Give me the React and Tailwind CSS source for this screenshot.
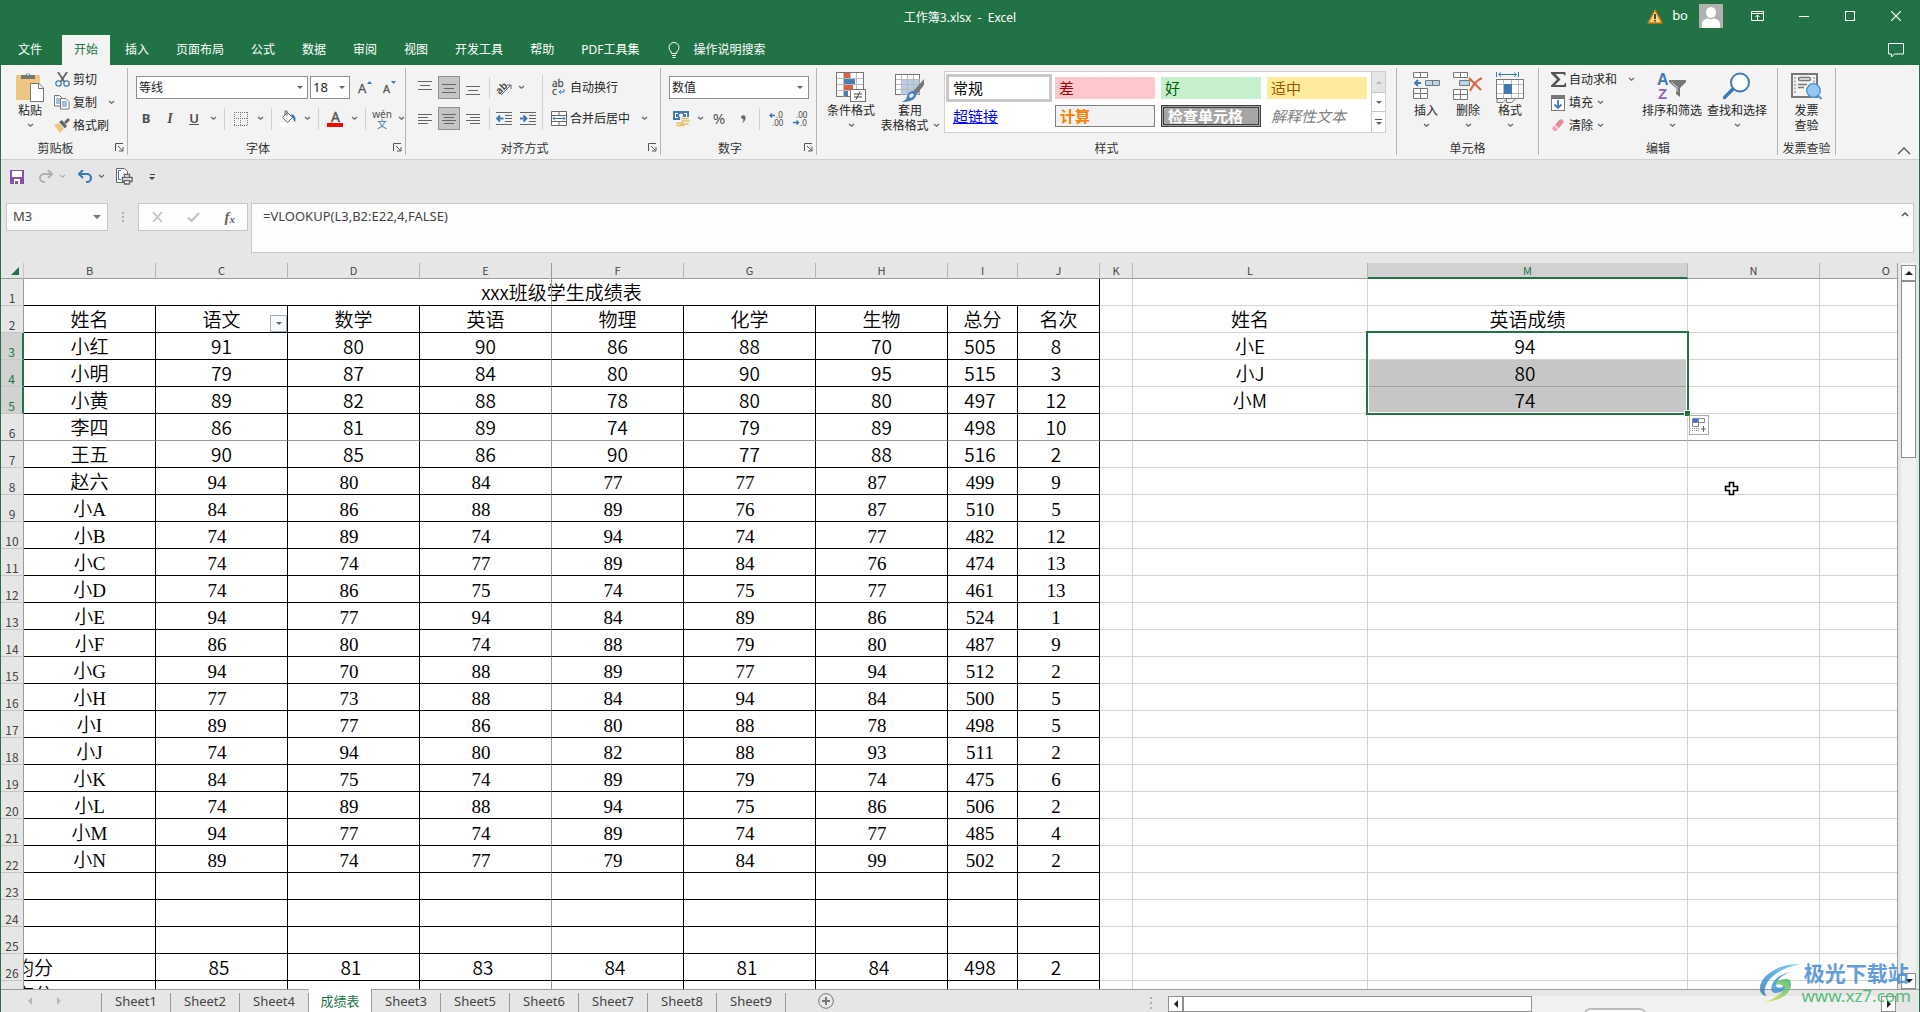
import React from "react";

/* ---------- small drawing helpers ---------- */
const Chev = ({ c = "#666" }) => (
  <svg width="7" height="5" viewBox="0 0 7 5" className="shrink-0">
    <path d="M1 1l2.500 2.300L6 1" fill="none" stroke={c} strokeWidth="1.200" />
  </svg>
);
const Tri = ({ c = "#666", w = 8 }) => (
  <svg width={w} height={w / 2} viewBox="0 0 8 4" className="shrink-0">
    <path d="M0 0h8L4 4z" fill={c} />
  </svg>
);
const Launcher = () => (
  <button aria-label="更多设置" className="absolute right-[3px] bottom-[3px]">
    <svg width="9" height="9" viewBox="0 0 9 9" fill="none" stroke="#555">
      <path d="M.5 8V.5H8M3 3l4.500 4.500M8 4v4H4" />
    </svg>
  </button>
);
const Sep = () => <span className="mx-1 h-[22px] w-px shrink-0 bg-[#d0d0d0]" />;
const Ib = ({ label, children }) => (
  <button aria-label={label} className="flex h-[23px] w-6 shrink-0 items-center justify-center">
    {children}
  </button>
);
const Cb = ({ label = "展开" }) => (
  <button aria-label={label} className="flex h-[23px] w-[14px] shrink-0 items-center justify-center">
    <Chev />
  </button>
);

const PasteIcon = () => (
  <svg width="28" height="30" viewBox="0 0 28 30">
    <rect x="0" y="3" width="24" height="25" rx="1" fill="#edc77f" />
    <path d="M5 7V3h4.500a2.700 2.700 0 0 1 5 0H19v4z" fill="#777" />
    <circle cx="12" cy="2.500" r="1" fill="#f3f3f3" />
    <path d="M14.500 11.500h8.500l4.500 4.500v13.500h-13z" fill="#fff" stroke="#777" />
    <path d="M22.500 11.500v5h5" fill="none" stroke="#777" />
  </svg>
);
const CutIcon = () => (
  <svg width="15" height="15" viewBox="0 0 15 15" fill="none">
    <path d="M3 0l6.500 10M12 0L5.500 10" stroke="#666" strokeWidth="1.800" />
    <circle cx="3.500" cy="11.500" r="2.700" stroke="#4a7fb5" strokeWidth="1.300" />
    <circle cx="11.500" cy="11.500" r="2.700" stroke="#4a7fb5" strokeWidth="1.300" />
  </svg>
);
const CopyIcon = () => (
  <svg width="16" height="15" viewBox="0 0 16 15" fill="#fff">
    <path d="M.5.500h5l2.500 2.500v8H.5z" stroke="#777" />
    <path d="M2 4h4M2 6h4M2 8h4" stroke="#4a7fb5" />
    <path d="M6.500 3.500h5.500l3 3v7.500H6.500z" stroke="#777" />
    <path d="M8 7h5M8 9h5M8 11h5" stroke="#4a7fb5" />
  </svg>
);
const BrushIcon = () => (
  <svg width="16" height="15" viewBox="0 0 16 15">
    <path d="M0 7l5-2 5 6-4 4z" fill="#edc77f" />
    <path d="M5 4l3-2 5 6-2 2.500z" fill="#666" />
    <path d="M10 4l4-4 2 2-4 4z" fill="#666" />
  </svg>
);
const Lines = ({ rows }) => (
  <svg width="14" height="14" viewBox="0 0 14 14" stroke="#666">
    {rows.map(([y, a, b]) => (
      <path key={y} d={`M${a} ${y}.5H${b}`} />
    ))}
  </svg>
);
const Indent = ({ out }) => (
  <svg width="16" height="13" viewBox="0 0 16 13" fill="none">
    <path d="M0 .5h16M9 3.500h7M9 6.500h7M9 9.500h7M0 12.500h16" stroke="#666" />
    <path d={out ? "M7.500 6.500h-6M4 3.500l-3 3 3 3" : "M0 6.500h6M3.500 3.500l3 3-3 3"} stroke="#3f78b5" strokeWidth="1.800" />
  </svg>
);
const Decimal = ({ more }) => (
  <svg width="15" height="14" viewBox="0 0 15 14" className="overflow-visible">
    <text x={more ? 7 : 3} y="6" fontSize="8" fontFamily="Noto Sans, sans-serif" fill="#444">{more ? ".0" : ".00"}</text>
    <text x={more ? 3 : 7} y="14" fontSize="8" fontFamily="Noto Sans, sans-serif" fill="#444">{more ? ".00" : ".0"}</text>
    <path d={more ? "M6 3.500H1M3 1.500l-2 2 2 2" : "M0 10.500h5M3.500 8.500l2 2-2 2"} fill="none" stroke="#3f78b5" strokeWidth="1.300" />
  </svg>
);
const CondIcon = () => (
  <svg width="31" height="30" viewBox="0 0 31 30">
    <rect x=".5" y=".5" width="27" height="24" fill="#fff" stroke="#777" />
    <path d="M7.500 1v24M14.500 1v24M20.500 1v24M1 6.500h26M1 12.500h26M1 18.500h26" stroke="#bbb" />
    <rect x="8" y="1" width="6" height="5" fill="#dc6141" />
    <rect x="8" y="7" width="11" height="5" fill="#4a7fb5" />
    <rect x="8" y="13" width="9" height="5" fill="#dc6141" />
    <rect x="8" y="19" width="4" height="5" fill="#4a7fb5" />
    <rect x="14.500" y="17.500" width="15" height="12" fill="#fff" stroke="#777" />
    <path d="M18 22h8M18 25h8M24 19.500l-4 8" stroke="#444" fill="none" />
  </svg>
);
const TableIcon = () => (
  <svg width="30" height="30" viewBox="0 0 30 30">
    <rect x=".5" y="2.500" width="24" height="20" fill="#fff" stroke="#777" />
    <rect x="6.500" y="7.500" width="18" height="15" fill="#b9cde5" />
    <path d="M6.500 3v20M12.500 3v20M18.500 3v20M1 7.500h24M1 12.500h24M1 17.500h24" stroke="#bbb" />
    <path d="M29 7v6l-7 9-3.500-3z" fill="#777" />
    <path d="M18 19c3 0 4.500 3 2.500 6-2 4-8 5-14 5 5-2 5-4 6-7 1-2.500 3-4 5.500-4z" fill="#4a7fb5" />
    <path d="M14 24c1-3 4-3 5-1-1 2-2 3-4 3z" fill="#dbe8f5" />
  </svg>
);
const InsertIcon = () => (
  <svg width="27" height="28" viewBox="0 0 27 28" fill="#fff" stroke="#777">
    <path d="M.5.500h14v5H.5zM7.500.500v5M.5 16.500h14v10H.5zM7.500 16.500v10M.5 21.500h14" />
    <path d="M12.500 8.500h14v5h-14zM19.500 8.500v5" fill="#b9d3ea" />
    <path d="M8 11H2M5 8l-3 3 3 3" fill="none" stroke="#3f78b5" strokeWidth="1.800" />
  </svg>
);
const DeleteIcon = () => (
  <svg width="30" height="28" viewBox="0 0 30 28" fill="#fff" stroke="#777">
    <path d="M.5.500h14v5H.5zM7.500.500v5M.5 17.500h14v10H.5zM7.500 17.500v10M.5 22.500h14" />
    <path d="M6.500 8.500h10v5h-10z" fill="#b9d3ea" />
    <path d="M16 6l12 12M29 6c-5 2-9 7-12 13" fill="none" stroke="#dc6141" strokeWidth="2" />
  </svg>
);
const FormatIcon = () => (
  <svg width="29" height="31" viewBox="0 0 29 31" fill="#fff">
    <path d="M.5 0v5M22.500 0v5M3 2.500h17M5 .5l-2.500 2L5 4.500M18 .5l2.500 2-2.500 2" fill="none" stroke="#3f78b5" />
    <rect x=".5" y="7.500" width="27" height="19" stroke="#777" />
    <path d="M7.500 8v18M15.500 8v18M22.500 8v18M1 12.500h26M1 21.500h26" stroke="#bbb" />
    <rect x="8" y="12" width="8" height="10" fill="#3f78b5" />
    <path d="M1 27v3.500h6l3-3M10.500 27v3.500h5l4-3.500" stroke="#777" fill="none" />
  </svg>
);
const SortIcon = () => (
  <svg width="30" height="29" viewBox="0 0 30 29" className="overflow-visible">
    <text x="0" y="13" fontSize="16" fontWeight="bold" fontFamily="Liberation Sans, sans-serif" fill="#4179b5">A</text>
    <text x="1" y="27" fontSize="15" fontWeight="bold" fontFamily="Liberation Sans, sans-serif" fill="#9a5fb8">Z</text>
    <path d="M12 8h17v2l-6 6v9l-4-3v-6l-7-6z" fill="#777" />
    <path d="M14.500 10l5.500 5v5" stroke="#ddd" fill="none" />
  </svg>
);
const FindIcon = () => (
  <svg width="28" height="28" viewBox="0 0 28 28">
    <path d="M10 17L1.500 25.500" stroke="#4179b5" strokeWidth="3.500" strokeLinecap="round" />
    <circle cx="17" cy="10.500" r="9" fill="#fff" stroke="#4179b5" strokeWidth="2" />
  </svg>
);
const InvoiceIcon = () => (
  <svg width="32" height="28" viewBox="0 0 32 28">
    <rect x="1" y="2" width="25" height="23" fill="none" stroke="#777" strokeWidth="2" />
    <path d="M4 5v17M23 5v8" stroke="#777" strokeDasharray="2 1.500" />
    <rect x="7.500" y="5.500" width="12" height="3" rx="1.500" fill="none" stroke="#777" strokeWidth="1.400" />
    <path d="M7 12.500h9M7 15.500h6" stroke="#777" strokeWidth="1.300" />
    <circle cx="22.500" cy="18.500" r="6.800" fill="#93c6f5" stroke="#4c90c8" strokeWidth="1.300" />
    <path d="M27 23.500l3.500 3.500" stroke="#4c90c8" strokeWidth="2" />
  </svg>
);

/* ---------- ribbon ---------- */
const Group = ({ label, className, launcher, children }) => (
  <section aria-label={label} className={`relative mt-[3px] mb-1 flex shrink-0 flex-col border-r border-[#b4b4b4] ${className}`}>
    <div className="flex h-[74px]">{children}</div>
    <div className={`flex flex-1 items-center justify-center text-[12px] leading-[13px] text-[#333] ${launcher ? "pr-[17px]" : ""}`}>{label}</div>
    {launcher && <Launcher />}
  </section>
);
const Big = ({ icon, lines, className, chevron = true }) => (
  <button className={`flex flex-col items-center pt-1 text-[12px] leading-[15px] whitespace-nowrap ${className}`}>
    <span className="mb-px flex h-[30px] items-start justify-center">{icon}</span>
    {lines[0]}
    <span className="flex h-[15px] items-center gap-1">
      {lines[1]}
      {chevron && <Chev />}
    </span>
  </button>
);
const Small = ({ icon, label, chevron, gap = "gap-1" }) => (
  <button className="flex h-[23px] items-center text-[12px] whitespace-nowrap">
    <span className="mr-[3px] flex w-4 justify-center">{icon}</span>
    <span className={`flex items-center ${gap}`}>
      {label}
      {chevron && <Chev />}
    </span>
  </button>
);

const styleCells = [
  ["常规", "bg-white text-black outline-[3px] outline-[#c9c9c5]"],
  ["差", "bg-[#ffc7ce] text-[#9c0006]"],
  ["好", "bg-[#c6efce] text-[#006100]"],
  ["适中", "bg-[#ffeb9c] text-[#9c5700]"],
  ["超链接", "text-[#0000ff] underline"],
  ["计算", "border border-[#7f7f7f] bg-[#f2f2f2] font-bold text-[#fa7d00]"],
  ["检查单元格", "border-[3px] border-double border-[#3f3f3f] bg-[#a5a5a5] font-bold text-white"],
  ["解释性文本", "text-[#7f7f7f] italic"],
];

const Ribbon = () => (
  <div className="flex h-[95px] border-b border-[#d0d0d0] bg-[#f3f3f3] text-[#262626]">
    <Group label="剪贴板" className="w-[127px]" launcher>
      <Big icon={<PasteIcon />} lines={["粘贴"]} className="ml-[9px] w-10" />
      <div className="ml-1 flex flex-col">
        <Small icon={<CutIcon />} label="剪切" />
        <Small icon={<CopyIcon />} label="复制" chevron gap="gap-[11px]" />
        <Small icon={<BrushIcon />} label="格式刷" />
      </div>
    </Group>

    <Group label="字体" className="w-[278px]" launcher>
      <div className="flex flex-col gap-2 pt-2 pl-[6px]">
        <div className="flex items-center pl-[2px]">
          <div className="flex h-[23px] w-[172px] items-center border border-[#8f8f8f] bg-white pr-1">
            <input aria-label="字体" defaultValue="等线" className="w-full min-w-0 pl-[2px] text-[12px] outline-none" />
            <Tri w={6} />
          </div>
          <div className="ml-[2px] flex h-[23px] w-10 items-center border border-[#8f8f8f] bg-white pr-1">
            <input aria-label="字号" defaultValue="18" className="w-full min-w-0 pl-[2px] text-[13px] outline-none" />
            <Tri w={6} />
          </div>
          <span className="w-[3px]" />
          <Ib label="增大字号">
            <svg width="15" height="15" viewBox="0 0 15 15" className="overflow-visible">
              <text x="0" y="13" fontSize="13" fontFamily="Noto Sans, sans-serif" fill="#555" stroke="#555" strokeWidth=".3">A</text>
              <path d="M9 4h5l-2.500-3z" fill="#3f78b5" />
            </svg>
          </Ib>
          <Ib label="减小字号">
            <svg width="15" height="15" viewBox="0 0 15 15" className="overflow-visible">
              <text x="1" y="13" fontSize="11" fontFamily="Noto Sans, sans-serif" fill="#555" stroke="#555" strokeWidth=".3">A</text>
              <path d="M9 1h5l-2.500 3z" fill="#3f78b5" />
            </svg>
          </Ib>
        </div>
        <div className="flex items-center text-[13px] text-[#505050]">
          <Ib label="加粗"><b>B</b></Ib>
          <Ib label="倾斜"><i className="font-['Liberation_Serif',serif] text-[14px] font-bold">I</i></Ib>
          <Ib label="下划线"><span className="font-semibold underline">U</span></Ib>
          <Cb />
          <Sep />
          <Ib label="边框">
            <svg width="14" height="14" viewBox="0 0 14 14" stroke="#777" fill="none" strokeDasharray="1 1">
              <path d="M.5 0v14M13.500 0v14M0 .5h14M0 13.500h14M6.500 0v14M0 6.500h14" />
            </svg>
          </Ib>
          <Cb />
          <Sep />
          <Ib label="填充颜色">
            <svg width="17" height="17" viewBox="0 0 17 17">
              <rect x="0" y="13" width="16" height="4" fill="#fff" />
              <path d="M2.500 7.500l5-5 5 5-5 5z" fill="#fff" stroke="#666" />
              <path d="M7 6V1H5v4" fill="none" stroke="#666" />
              <path d="M11 4c4 1 5.500 4 4 8-2-1-1-4-3-5z" fill="#3f78b5" />
            </svg>
          </Ib>
          <Cb />
          <Sep />
          <Ib label="字体颜色">
            <svg width="17" height="17" viewBox="0 0 17 17" className="overflow-visible">
              <text x="4" y="12" fontSize="14" fontFamily="Noto Sans, sans-serif" fill="#555" stroke="#555" strokeWidth=".4">A</text>
              <rect x="0" y="13" width="16" height="4" fill="#f00" />
            </svg>
          </Ib>
          <Cb />
          <Sep />
          <Ib label="拼音">
            <span className="flex flex-col items-center text-[10px] leading-[10px]">
              wén<span className="text-[#3f78b5]">文</span>
            </span>
          </Ib>
          <Cb />
        </div>
      </div>
    </Group>

    <Group label="对齐方式" className="w-[255px]" launcher>
      <div className="flex w-[136px] flex-col gap-2 pt-2 pl-[7px]">
        <div className="flex items-center">
          <Ib label="顶端对齐"><Lines rows={[[0, 0, 14], [4, 2, 12], [8, 0, 14]]} /></Ib>
          <button aria-label="垂直居中" className="mx-px flex h-[23px] w-[22px] items-center justify-center border border-[#8f8f8f] bg-[#c5c5c5]">
            <Lines rows={[[3, 0, 14], [7, 2, 12], [11, 0, 14]]} />
          </button>
          <Ib label="底端对齐"><Lines rows={[[5, 0, 14], [9, 2, 12], [13, 0, 14]]} /></Ib>
          <Sep />
          <button aria-label="方向" className="flex h-[23px] w-5 items-center justify-center">
            <svg width="17" height="16" viewBox="0 0 17 16" className="overflow-visible">
              <text x="-1" y="12" fontSize="10" fontWeight="bold" fontFamily="Noto Sans, sans-serif" fill="#555" transform="rotate(-45 5 8)">ab</text>
              <path d="M5 15L15 5M11 5h4v4" fill="none" stroke="#666" />
            </svg>
          </button>
          <Cb />
        </div>
        <div className="flex items-center">
          <Ib label="左对齐"><Lines rows={[[2, 0, 14], [5, 0, 10], [8, 0, 14], [11, 0, 10]]} /></Ib>
          <button aria-label="居中" className="mx-px flex h-[23px] w-[22px] items-center justify-center border border-[#8f8f8f] bg-[#c5c5c5]">
            <Lines rows={[[2, 0, 14], [5, 2, 12], [8, 0, 14], [11, 2, 12]]} />
          </button>
          <Ib label="右对齐"><Lines rows={[[2, 0, 14], [5, 4, 14], [8, 0, 14], [11, 4, 14]]} /></Ib>
          <Sep />
          <button aria-label="减少缩进量" className="flex h-[23px] w-5 items-center justify-center"><Indent out /></button>
          <button aria-label="增加缩进量" className="ml-1 flex h-[23px] w-5 items-center justify-center"><Indent /></button>
        </div>
      </div>
      <span className="mt-[7px] h-[55px] w-px bg-[#d0d0d0]" />
      <div className="flex flex-col gap-2 pt-2 pl-2">
        <Small
          icon={
            <svg width="14" height="16" viewBox="0 0 14 16" className="overflow-visible">
              <text x="0" y="7" fontSize="10" fontFamily="Noto Sans, sans-serif" fill="#555" stroke="#555" strokeWidth=".3">ab</text>
              <text x="0" y="15" fontSize="10" fontFamily="Noto Sans, sans-serif" fill="#555" stroke="#555" strokeWidth=".3">c</text>
              <path d="M12 9v3H7M9 10l-2 2 2 2" fill="none" stroke="#3f78b5" />
            </svg>
          }
          label="自动换行"
        />
        <Small
          icon={
            <svg width="16" height="15" viewBox="0 0 16 15" fill="#fff" stroke="#666">
              <path d="M.5.500h15v14H.5zM.5 4.500h15M.5 10.500h15M8 .5v4M8 10.500v4" />
              <path d="M2 7.500h12M4 5.500l-2 2 2 2M12 5.500l2 2-2 2" fill="none" stroke="#3f78b5" />
            </svg>
          }
          label="合并后居中"
          chevron
          gap="gap-[11px]"
        />
      </div>
    </Group>

    <Group label="数字" className="w-[156px]" launcher>
      <div className="flex flex-col gap-2 pt-2 pl-2">
        <label className="relative flex h-[23px] w-[140px] items-center border border-[#8f8f8f] bg-white">
          <select aria-label="数字格式" className="w-full appearance-none pl-[2px] text-[12px] outline-none">
            <option>数值</option>
          </select>
          <span className="pointer-events-none absolute right-[5px]"><Tri w={6} /></span>
        </label>
        <div className="flex items-center text-[#555]">
          <Ib label="会计数字格式">
            <svg width="17" height="16" viewBox="0 0 17 16">
              <rect x="0" y="0" width="16" height="9" fill="#4179b5" />
              <path d="M2 2h3v1H3v3h2v1H2zM14 2h-3v1h2v3h-2v1h3z" fill="#fff" />
              <circle cx="8" cy="4.500" r="2" fill="#fff" />
              <rect x="7" y="6" width="10" height="10" fill="#f3f3f3" />
              <path d="M9 7.500h6M9 10h7M4 12h6M8 13h7M4 14.500h7" stroke="#e9bd6d" strokeWidth="1.700" strokeLinecap="round" />
            </svg>
          </Ib>
          <Cb />
          <Ib label="百分比样式"><span className="text-[15px]">%</span></Ib>
          <Ib label="千位分隔样式">
            <svg width="5" height="8" viewBox="0 0 5 8"><path d="M0 2a2.200 2.200 0 1 1 4.500 1C4.500 5.500 3 7 1 8c1-1.500 1.500-2.500 1.300-4A2 2 0 0 1 0 2z" fill="#666" /></svg>
          </Ib>
          <Sep />
          <Ib label="增加小数位数"><Decimal more /></Ib>
          <Ib label="减少小数位数"><Decimal /></Ib>
        </div>
      </div>
    </Group>

    <Group label="样式" className="w-[580px]">
      <Big icon={<CondIcon />} lines={["条件格式"]} className="ml-[6px] w-14" />
      <Big icon={<TableIcon />} lines={["套用", "表格格式"]} className="w-[62px]" />
      <div className="mt-[3px] ml-[3px] flex h-[62px] border border-[#d0d0d0] bg-white">
        <div className="grid grid-cols-4 content-start gap-[6px] py-[5px] pr-1 pl-1">
          {styleCells.map(([t, c]) => (
            <button key={t} className={`flex h-[22px] w-[100px] items-center pl-1 text-[15px] leading-none ${c}`}>{t}</button>
          ))}
        </div>
        <div className="flex w-[14px] flex-col border-l border-[#c6c6c6]">
          <button aria-label="上一行" className="flex h-5 items-center justify-center bg-[#e5e5e5]"><span className="rotate-180"><Tri w={6} c="#b5b5b5" /></span></button>
          <button aria-label="下一行" className="flex h-5 items-center justify-center border-y border-[#c6c6c6]"><Tri w={6} /></button>
          <button aria-label="其他样式" className="flex flex-1 flex-col items-center justify-center gap-[2px]"><span className="h-px w-[7px] bg-[#555]" /><Tri w={6} /></button>
        </div>
      </div>
    </Group>

    <Group label="单元格" className="w-[142px]">
      <Big icon={<InsertIcon />} lines={["插入"]} className="ml-2 w-[42px]" />
      <Big icon={<DeleteIcon />} lines={["删除"]} className="w-[42px]" />
      <Big icon={<FormatIcon />} lines={["格式"]} className="w-[42px]" />
    </Group>

    <Group label="编辑" className="w-[239px]">
      <div className="ml-[11px] flex w-[90px] flex-col">
        <Small
          icon={<svg width="15" height="15" viewBox="0 0 15 15"><path d="M0 0h14.500v3.500h-1l-1-1.500H4.500l5 5.500-5.500 5.500h9l1-2h1v4H0v-1.500l6-6L0 1.500z" fill="#555" /></svg>}
          label="自动求和"
          chevron
          gap="gap-[11px]"
        />
        <Small
          icon={<svg width="14" height="16" viewBox="0 0 14 16"><rect x=".5" y=".5" width="13" height="15" fill="#fff" stroke="#777" /><rect width="14" height="4" fill="#777" /><path d="M7 5v8M3.500 9.500L7 13l3.500-3.500" fill="none" stroke="#3f78b5" strokeWidth="1.800" /></svg>}
          label="填充"
          chevron
        />
        <Small
          icon={<svg width="14" height="13" viewBox="0 0 14 13"><path d="M8 1l3-1 2 3-5 6-4-3z" fill="#e8899a" /><path d="M3 6.500l4 3.500-2 2H3L1 9.500z" fill="#f0a5b2" /></svg>}
          label="清除"
          chevron
        />
      </div>
      <Big icon={<SortIcon />} lines={["排序和筛选"]} className="w-16" />
      <Big icon={<FindIcon />} lines={["查找和选择"]} className="w-[66px]" />
    </Group>

    <Group label="发票查验" className="w-[58px]">
      <Big icon={<InvoiceIcon />} lines={["发票", "查验"]} className="w-full" chevron={false} />
    </Group>
    <button aria-label="折叠功能区" className="mt-auto mr-2 mb-1 ml-auto">
      <svg width="14" height="8" viewBox="0 0 14 8"><path d="M1 7l6-6 6 6" fill="none" stroke="#555" strokeWidth="1.400" /></svg>
    </button>
  </div>
);

/* ---------- title and tabs ---------- */
const tabs = ["插入", "页面布局", "公式", "数据", "审阅", "视图", "开发工具", "帮助", "PDF工具集"];

const TitleBar = () => (
  <header className="bg-[#217346] text-[12px] text-white">
    <div className="grid h-[35px] grid-cols-[1fr_auto_1fr] items-center">
      <span />
      <h1 className="whitespace-pre">工作簿3.xlsx  -  Excel</h1>
      <div className="flex items-center justify-end pr-[18px] pb-[3px]">
        <svg width="16" height="15" viewBox="0 0 16 15"><path d="M8 1l7 13H1z" fill="#f8d98a" stroke="#d8730f" strokeWidth="1.500" strokeLinejoin="round" /><path d="M8 5v5M8 11v1.500" stroke="#222" strokeWidth="1.600" /></svg>
        <span className="mr-px ml-[9px] text-[13px]">bo</span>
        <svg width="24" height="24" viewBox="0 0 24 24" className="ml-[10px]">
          <rect width="24" height="24" fill="#b1b1b1" />
          <ellipse cx="12" cy="8.500" rx="5" ry="5.500" fill="#fff" />
          <path d="M3 24c-1-7 2-9 6-9.500q3 1.500 6 0c4 .5 7 2.500 6 9.500z" fill="#fff" />
        </svg>
        <button aria-label="功能区显示选项" className="ml-7"><svg width="13" height="10" viewBox="0 0 13 10" fill="none" stroke="#fff"><path d="M.5.500h12v9H.5zM.5 2.500h12M6.500 9V4M4.500 6l2-2 2 2" /></svg></button>
        <button aria-label="最小化" className="ml-[35px]"><svg width="10" height="10" viewBox="0 0 10 10"><path d="M0 5.500h10" stroke="#fff" /></svg></button>
        <button aria-label="最大化" className="ml-9"><svg width="10" height="10" viewBox="0 0 10 10"><rect x=".5" y=".5" width="9" height="9" fill="none" stroke="#fff" /></svg></button>
        <button aria-label="关闭" className="ml-9"><svg width="10" height="10" viewBox="0 0 10 10"><path d="M0 0l10 10M10 0L0 10" stroke="#fff" strokeWidth="1.200" /></svg></button>
      </div>
    </div>
    <nav className="flex h-[30px] items-center whitespace-nowrap">
      <button className="w-[61px] pl-[17px] text-left">文件</button>
      <button className="flex h-full items-center bg-[#f3f3f3] px-3 text-[#217346]">开始</button>
      <div className="ml-[15px] flex gap-[27px]">
        {tabs.map((t) => <button key={t}>{t}</button>)}
      </div>
      <button className="ml-[29px] flex items-center gap-[13px]">
        <svg width="12" height="16" viewBox="0 0 12 16" fill="none" stroke="#fff"><path d="M3.500 11.500C3.500 9 1 8.500 1 5.500a5 5 0 0 1 10 0C11 8.500 8.500 9 8.500 11.500zM4 13.500h4M4.500 15.500h3" /></svg>
        操作说明搜索
      </button>
      <button aria-label="批注" className="mr-[15px] ml-auto"><svg width="16" height="15" viewBox="0 0 16 15"><path d="M.5.500h15v10.500H6.500L3.500 14V11h-3z" fill="none" stroke="#fff" /></svg></button>
    </nav>
  </header>
);

const QuickAccess = () => (
  <div className="flex h-[34px] items-center pb-px pl-[9px]">
    <button aria-label="保存"><svg width="14" height="14" viewBox="0 0 14 14"><path d="M0 0h14v14H0z" fill="#8552a8" /><path d="M2 1h10v6H2zM4 9h6v5H4z" fill="#fff" /><path d="M5 11h3v3H5z" fill="#8552a8" /></svg></button>
    <button aria-label="恢复" className="ml-[15px]"><svg width="14" height="13" viewBox="0 0 14 13"><path d="M12 4H5a4 4 0 0 0 0 8h1M9 0l4 4-4 4" fill="none" stroke="#b0b0b0" strokeWidth="2" /></svg></button>
    <span className="ml-[6px] flex"><Chev c="#b0b0b0" /></span>
    <button aria-label="撤消" className="ml-3"><svg width="14" height="13" viewBox="0 0 14 13"><path d="M2 4h7a4 4 0 0 1 0 8H8M5 0L1 4l4 4" fill="none" stroke="#3f78b5" strokeWidth="2.200" /></svg></button>
    <span className="ml-[6px] flex"><Chev /></span>
    <button aria-label="打印预览" className="ml-[11px]"><svg width="17" height="17" viewBox="0 0 17 17" fill="#fff" stroke="#666"><path d="M.5.500h8l3 3v11H.5z" /><path d="M5 2.500H2.500v9H5" stroke="#3f78b5" fill="none" /><path d="M8.500 6.500h5v3h-5zM6.500 9.500h9.500v4H6.500z" strokeWidth="1.400" /><path d="M8.500 12.500h5v3.500h-5z" strokeWidth="1.300" /></svg></button>
    <button aria-label="自定义快速访问工具栏" className="ml-4 flex flex-col items-center gap-[2px]"><span className="h-px w-[5px] bg-[#444]" /><Tri w={6} c="#444" /></button>
  </div>
);

const FormulaBar = () => (
  <div className="flex items-start pt-[9px] pr-[5px] pb-[10px] pl-[5px]">
    <div className="flex h-7 w-[102px] items-center border border-[#c6c6c6] bg-[#fdfdfd] pr-[6px]">
      <input aria-label="名称框" defaultValue="M3" className="w-full min-w-0 pl-[6px] text-[13px] text-[#444] outline-none" />
      <Tri c="#777" />
    </div>
    <span className="mx-[14px] flex h-7 flex-col items-center justify-center gap-[2px]">
      {[0, 1, 2].map((i) => <span key={i} className="h-[2px] w-[2px] bg-[#b0b0b0]" />)}
    </span>
    <div className="flex h-7 w-[110px] items-center justify-between border border-[#c6c6c6] bg-[#fdfdfd] pr-3 pl-[13px]">
      <button aria-label="取消"><svg width="11" height="10" viewBox="0 0 11 10"><path d="M1 0l9 10M10 0L1 10" stroke="#c4c4c4" strokeWidth="1.800" /></svg></button>
      <button aria-label="输入"><svg width="13" height="10" viewBox="0 0 13 10"><path d="M1 5.500L4.500 9 12 1" fill="none" stroke="#c4c4c4" strokeWidth="2.400" /></svg></button>
      <button aria-label="插入函数" className="flex items-end font-['Liberation_Serif',serif] leading-none text-[#666] italic"><span className="text-[15px] font-bold">f</span><span className="text-[11px] font-bold">x</span></button>
    </div>
    <div className="ml-[3px] flex h-[50px] flex-1 items-start border border-[#c6c6c6] bg-[#fdfdfd] pt-[3px]">
      <input aria-label="编辑栏" defaultValue="=VLOOKUP(L3,B2:E22,4,FALSE)" className="flex-1 pl-[11px] text-[13px] leading-[18px] text-[#444] outline-none" />
      <button aria-label="折叠编辑栏" className="mt-[5px] mr-1"><svg width="8" height="5" viewBox="0 0 8 5"><path d="M1 4l3-3 3 3" fill="none" stroke="#555" strokeWidth="1.500" /></svg></button>
    </div>
  </div>
);

/* ---------- sheet ---------- */
const head = ["姓名", "语文", "数学", "英语", "物理", "化学", "生物", "总分", "名次"];
const data = [
  ["小红", 91, 80, 90, 86, 88, 70, 505, 8],
  ["小明", 79, 87, 84, 80, 90, 95, 515, 3],
  ["小黄", 89, 82, 88, 78, 80, 80, 497, 12],
  ["李四", 86, 81, 89, 74, 79, 89, 498, 10],
  ["王五", 90, 85, 86, 90, 77, 88, 516, 2],
  ["赵六", 94, 80, 84, 77, 77, 87, 499, 9],
  ["小A", 84, 86, 88, 89, 76, 87, 510, 5],
  ["小B", 74, 89, 74, 94, 74, 77, 482, 12],
  ["小C", 74, 74, 77, 89, 84, 76, 474, 13],
  ["小D", 74, 86, 75, 74, 75, 77, 461, 13],
  ["小E", 94, 77, 94, 84, 89, 86, 524, 1],
  ["小F", 86, 80, 74, 88, 79, 80, 487, 9],
  ["小G", 94, 70, 88, 89, 77, 94, 512, 2],
  ["小H", 77, 73, 88, 84, 94, 84, 500, 5],
  ["小I", 89, 77, 86, 80, 88, 78, 498, 5],
  ["小J", 74, 94, 80, 82, 88, 93, 511, 2],
  ["小K", 84, 75, 74, 89, 79, 74, 475, 6],
  ["小L", 74, 89, 88, 94, 75, 86, 506, 2],
  ["小M", 94, 77, 74, 89, 74, 77, 485, 4],
  ["小N", 89, 74, 77, 79, 84, 99, 502, 2],
];
const lookup = { 2: ["姓名", "英语成绩"], 3: ["小E", 94], 4: ["小J", 80], 5: ["小M", 74] };
const empty = Array(9).fill("");

const rowCells = (n) => {
  if (n === 2) return head;
  if (n >= 3 && n <= 22) return data[n - 3];
  if (n === 26) return ["平均分", 85, 81, 83, 84, 81, 84, 498, 2];
  if (n === 27) return ["最高分", "", "", "", "", "", "", "", ""];
  return empty;
};

const SongName = ({ name }) => {
  const latin = name.replace(/[^A-Z]/g, "");
  return (
    <span className="flex h-[22px] items-baseline justify-center leading-[18px]">
      <span className="font-['Noto_Sans_CJK_SC',sans-serif] font-[350]">{name.replace(/[A-Z]/g, "")}</span>
      {latin && <span>{latin}</span>}
    </span>
  );
};

const Selection = () => (
  <div className="pointer-events-none absolute -top-[2px] -left-[2px] z-10 h-[84px] w-[323px] border-2 border-[#217346] text-left">
    <div className="h-full w-full border border-white" />
    <span className="absolute -right-[4px] -bottom-[4px] h-[7px] w-[7px] border border-white bg-[#217346]" />
    <svg width="20" height="20" viewBox="0 0 20 20" className="absolute top-[82px] left-[321px]">
      <rect x=".5" y=".5" width="19" height="19" fill="#fff" stroke="#ababab" />
      <path d="M3.500 3.500h12v4h-12zM3.500 7.500h6v4h-6zM9.500 3.500v4" fill="none" stroke="#888" />
      <rect x="4" y="4" width="5" height="3" fill="#2f75e8" />
      <path d="M3 13.500h8M3 15.500h8" stroke="#999" strokeDasharray="1 1" />
      <path d="M14.500 11v6M12 14h5" stroke="#666" />
    </svg>
  </div>
);

const Sheet = () => (
  <table className="w-full table-fixed border-separate border-spacing-0 bg-white text-center text-[19px] leading-[26px] font-[350] text-black">
    <colgroup>
      <col className="w-[23px]" />
      {[1, 2, 3, 4, 5, 6, 7].map((i) => <col key={i} className="w-[132px]" />)}
      <col className="w-[70px]" />
      <col className="w-[82px]" />
      <col className="w-[33px]" />
      <col className="w-[235px]" />
      <col className="w-[320px]" />
      <col className="w-[132px]" />
      <col />
    </colgroup>
    <thead>
      <tr className="h-4 bg-[#e6e6e6] text-[11px] leading-[14px] text-[#444]">
        <th aria-label="全选" className="border-r border-b border-r-[#c6c6c6] border-b-[#9b9b9b] p-0">
          <svg width="8" height="8" viewBox="0 0 8 8" className="mr-1 ml-auto"><path d="M8 0v8H0z" fill="#217346" /></svg>
        </th>
        {"BCDEFGHIJKLMNO".split("").map((c) => (
          <th key={c} scope="col" className={`p-0 align-top font-normal ${c === "M" ? "border-r border-b-2 border-r-[#b5b5b5] border-b-[#217346] bg-[#d2d2d2] text-[#217346]" : c === "O" ? "border-b border-[#9b9b9b] pr-[7px] text-right" : c === "E" ? "border-r border-b border-[#9b9b9b]" : "border-r border-b border-r-[#b5b5b5] border-b-[#9b9b9b]"}`}>{c}</th>
        ))}
      </tr>
    </thead>
    <tbody className="align-top">
      {Array.from({ length: 27 }, (_, i) => i + 1).map((n) => {
        const sel = n >= 3 && n <= 5;
        const freeze = n === 6;
        const song = n >= 8 && n <= 22;
        const bottom = freeze ? "border-b-[#9b9b9b]" : "border-b-black";
        const light = freeze ? "border-b-[#9b9b9b]" : "border-b-[#d4d4d4]";
        return (
          <tr key={n} className="h-[27px]">
            <th scope="row" className={`border-b p-0 align-bottom text-[12px] leading-[14px] font-normal ${freeze ? "border-b-[#9b9b9b]" : "border-b-[#c6c6c6]"} ${sel ? "border-r-2 border-r-[#217346] bg-[#d2d2d2] text-[#217346]" : "border-r border-r-[#9b9b9b] bg-[#e6e6e6] text-[#444]"}`}>{n}</th>
            {n === 1 ? (
              <td colSpan={9} className="relative border-r border-b border-black p-0">
                xxx班级学生成绩表
                <span className="absolute top-0 left-[527px] h-full w-px bg-[#9b9b9b]" />
              </td>
            ) : (
              rowCells(n).map((v, k) => {
                const shifted = k > 0 && n > 2 && (k > 6 || n > 7);
                const pad = shifted ? (song && k < 7 ? "pr-[9px]" : "pr-[5px]") : "pr-0";
                return (
                  <td key={k} className={`relative overflow-hidden border-r border-b pb-0 pl-0 ${bottom} ${k === 3 ? "border-r-[#9b9b9b]" : "border-r-black"} ${song ? "pt-1 font-['Liberation_Serif',serif] leading-[22px] font-normal" : "pt-0"} ${pad}`}>
                    {n > 25 && k === 0 ? (
                      <span className="flex w-[29px] justify-end whitespace-nowrap">{v}</span>
                    ) : song && k === 0 ? (
                      <SongName name={v} />
                    ) : (
                      v
                    )}
                    {n === 2 && k === 1 && (
                      <button aria-label="筛选" className="absolute right-0 bottom-0 flex h-[17px] w-[17px] items-center justify-center border border-[#a6b0bd] bg-[#f8fafc]"><Tri w={6} /></button>
                    )}
                  </td>
                );
              })
            )}
            <td className={`border-r border-b border-r-[#d4d4d4] p-0 ${light}`} />
            <td className={`border-r border-b border-r-[#d4d4d4] p-0 ${light}`}>{lookup[n]?.[0]}</td>
            <td className={`relative border-r border-b border-r-[#d4d4d4] py-0 pl-0 ${n === 4 || n === 5 ? "border-b-[#a0a0a0] bg-[#c6c6c6]" : light} ${sel ? "pr-[5px]" : "pr-0"}`}>
              {lookup[n]?.[1]}
              {n === 3 && <Selection />}
            </td>
            <td className={`border-r border-b border-r-[#d4d4d4] p-0 ${light}`} />
            <td className={`border-b p-0 ${light}`} />
          </tr>
        );
      })}
    </tbody>
  </table>
);

const ArrowBtn = ({ label, d }) => (
  <button aria-label={label} className="flex h-4 w-[15px] shrink-0 items-center justify-center border border-[#8f8f8f] bg-white">
    <svg width="8" height="8" viewBox="0 0 8 8"><path d={d} fill="#222" /></svg>
  </button>
);

const SheetTab = ({ name }) => <button className="my-[3px] mb-0 w-[69px] border-r border-[#9b9b9b] pb-1">{name}</button>;

const BottomBar = () => (
  <footer className="flex h-[23px] shrink-0 overflow-hidden text-[13px] leading-4 text-[#444]">
    <div className="flex flex-1 border-t border-[#9b9b9b]">
      <div className="my-[3px] mb-0 flex w-[101px] items-center gap-[25px] border-r border-[#9b9b9b] pb-1 pl-[27px]">
        <svg width="4" height="8" viewBox="0 0 4 8"><path d="M4 0v8L0 4z" fill="#b8b8b8" /></svg>
        <svg width="4" height="8" viewBox="0 0 4 8"><path d="M0 0v8l4-4z" fill="#b8b8b8" /></svg>
      </div>
      <SheetTab name="Sheet1" />
      <SheetTab name="Sheet2" />
      <SheetTab name="Sheet4" />
      <button className="-mt-px w-[63px] border-r border-[#9b9b9b] bg-white text-[#217346]">成绩表</button>
      {["Sheet3", "Sheet5", "Sheet6", "Sheet7", "Sheet8", "Sheet9"].map((s) => <SheetTab key={s} name={s} />)}
      <button aria-label="新工作表" className="ml-8"><svg width="16" height="16" viewBox="0 0 16 16" fill="none" stroke="#777"><circle cx="8" cy="8" r="7.300" /><path d="M8 4v8M4 8h8" strokeWidth="2" /></svg></button>
    </div>
    <div className="flex w-[769px] items-end border-t border-[#9b9b9b] pr-[23px]">
      <span className="mr-4 flex flex-col gap-[3px] pb-[3px]">
        {[0, 1, 2].map((i) => <span key={i} className="h-[2px] w-[2px] bg-[#b0b0b0]" />)}
      </span>
      <ArrowBtn label="向左滚动" d="M6 0v8L2 4z" />
      <div className="h-4 flex-1 bg-[#f1f1f1]"><div className="h-4 w-1/2 border border-[#8f8f8f] bg-white" /></div>
      <ArrowBtn label="向右滚动" d="M2 0v8l4-4z" />
    </div>
  </footer>
);

export default function App() {
  return (
    <div className="relative flex h-screen flex-col overflow-hidden border-x border-[#217346] bg-[#e6e6e6] font-['Noto_Sans','Noto_Sans_CJK_SC',sans-serif]">
      <TitleBar />
      <Ribbon />
      <QuickAccess />
      <FormulaBar />
      <main className="flex min-h-0 flex-1">
        <div className="min-w-0 flex-1 overflow-hidden border-r border-[#9b9b9b] font-['Noto_Sans_CJK_SC',sans-serif]">
          <Sheet />
        </div>
        <div className="mx-[3px] flex w-[15px] flex-col bg-[#f1f1f1] pt-[2px]">
          <ArrowBtn label="向上滚动" d="M0 6h8L4 2z" />
          <div className="h-[177px] border border-[#8f8f8f] bg-white" />
          <div className="mt-auto"><ArrowBtn label="向下滚动" d="M0 2h8L4 6z" /></div>
        </div>
      </main>
      <BottomBar />

      <svg width="16" height="16" viewBox="0 0 16 16" className="absolute top-[481px] left-[1723px]">
        <path d="M5.500 1.500h4v4h4v4h-4v4h-4v-4h-4v-4h4z" fill="#fff" stroke="#000" strokeWidth="1.600" />
      </svg>
      <span className="absolute right-[273px] -bottom-4 h-5 w-[62px] rounded-md border-2 border-[#bbb] bg-white" />
      <div className="pointer-events-none absolute right-2 bottom-2 flex items-center opacity-80">
        <svg width="42" height="41" viewBox="0 0 44 42">
          <defs>
            <linearGradient id="wave" x1="1" y1="0" x2="0" y2="1"><stop offset="0" stopColor="#5cc8ef" /><stop offset="1" stopColor="#2b6fc0" /></linearGradient>
            <linearGradient id="leaf" x1="1" y1="0" x2="0" y2="1"><stop offset="0" stopColor="#35b36b" /><stop offset="1" stopColor="#f0e23c" /></linearGradient>
          </defs>
          <path d="M43 1C22-1 1 13 1 26c0 5 3 8 7 8-2-2-3-5-1-10C10 14 24 4 43 1z" fill="url(#wave)" />
          <path d="M14 24c3-6 13-10 19-6 3 9-5 21-29 23 10-3 19-8 22-14 1-4-5-7-12-3z" fill="url(#leaf)" />
          <path d="M33 9c-12 2-21 10-20 19 1 3 5 4 9 2 4-1 6-4 5-7-4 3-8 3-9 1-1-6 6-12 15-15z" fill="#3a8fd6" />
        </svg>
        <div className="flex flex-col text-center leading-none">
          <span className="text-[21px] font-bold text-[#3b86d0]">极光下载站</span>
          <span className="mt-[3px] text-[17px] text-[#31b060]">www.xz7.com</span>
        </div>
      </div>
    </div>
  );
}
